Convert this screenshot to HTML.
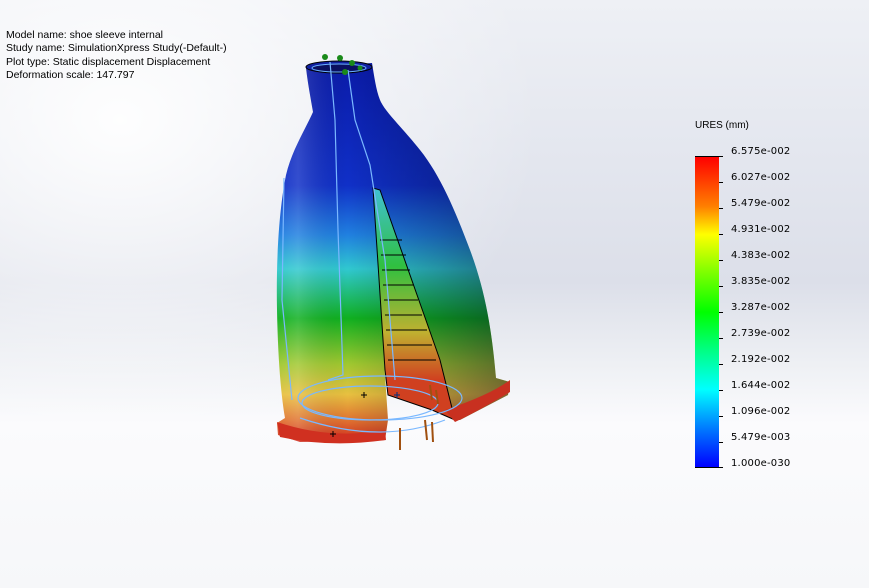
<!DOCTYPE html>
<html><head><meta charset="utf-8"><style>
html,body{margin:0;padding:0}
body{width:869px;height:588px;overflow:hidden;position:relative;font-family:"DejaVu Sans","Liberation Sans",sans-serif;
background:linear-gradient(180deg,#eef0f5 0%,#e4e7ef 25%,#dcdfe9 48%,#eef0f4 62%,#fbfbfd 72%,#f6f7f9 100%);}
.fade{position:absolute;left:0;top:0;width:869px;height:588px;background:radial-gradient(ellipse 420px 330px at 120px 120px,rgba(255,255,255,0.95),rgba(255,255,255,0) 100%);}
.info{position:absolute;left:6px;top:29px;font-size:10.5px;line-height:13.3px;color:#000;font-family:"Liberation Sans",sans-serif;}
.lbl{position:absolute;left:731px;font-size:10px;color:#000;letter-spacing:0.2px}
.tick{position:absolute;left:719px;width:4px;height:1px;background:#000}
</style></head><body>
<div class="fade"></div>
<div class="info">Model name: shoe sleeve internal<br>Study name: SimulationXpress Study(-Default-)<br>Plot type: Static displacement Displacement<br>Deformation scale: 147.797</div>
<div style="position:absolute;left:695px;top:120px;font-size:10px;font-family:'Liberation Sans',sans-serif">URES (mm)</div>
<div style="position:absolute;left:695px;top:156px;width:24px;height:312px;border-top:1px solid #000;border-bottom:1px solid #000;box-sizing:border-box;background:linear-gradient(180deg,#ff0000 0%,#ff8000 16%,#ffff00 25%,#80ff00 37%,#00ff00 50%,#00ff80 62%,#00ffff 75%,#0080ff 87%,#0000ff 100%)"></div>
<div class="tick" style="top:156px"></div><div class="tick" style="top:182px"></div><div class="tick" style="top:208px"></div><div class="tick" style="top:234px"></div><div class="tick" style="top:260px"></div><div class="tick" style="top:286px"></div><div class="tick" style="top:312px"></div><div class="tick" style="top:338px"></div><div class="tick" style="top:364px"></div><div class="tick" style="top:390px"></div><div class="tick" style="top:416px"></div><div class="tick" style="top:442px"></div><div class="tick" style="top:467px"></div>
<div class="lbl" style="top:146px">6.575e-002</div>
<div class="lbl" style="top:172px">6.027e-002</div>
<div class="lbl" style="top:198px">5.479e-002</div>
<div class="lbl" style="top:224px">4.931e-002</div>
<div class="lbl" style="top:250px">4.383e-002</div>
<div class="lbl" style="top:276px">3.835e-002</div>
<div class="lbl" style="top:302px">3.287e-002</div>
<div class="lbl" style="top:328px">2.739e-002</div>
<div class="lbl" style="top:354px">2.192e-002</div>
<div class="lbl" style="top:380px">1.644e-002</div>
<div class="lbl" style="top:406px">1.096e-002</div>
<div class="lbl" style="top:432px">5.479e-003</div>
<div class="lbl" style="top:458px">1.000e-030</div>
<svg width="869" height="588" style="position:absolute;left:0;top:0">
<defs>
<linearGradient id="g" x1="0" y1="60" x2="0" y2="440" gradientUnits="userSpaceOnUse">
<stop offset="0" stop-color="#0a1aa8"/><stop offset="0.33" stop-color="#1030c8"/><stop offset="0.46" stop-color="#2080e0"/><stop offset="0.55" stop-color="#30c8d0"/><stop offset="0.68" stop-color="#10b020"/><stop offset="0.8" stop-color="#a0c830"/><stop offset="0.88" stop-color="#e8c040"/><stop offset="0.95" stop-color="#e07030"/><stop offset="1" stop-color="#d03020"/></linearGradient>
<linearGradient id="sh" x1="280" y1="0" x2="505" y2="0" gradientUnits="userSpaceOnUse">
<stop offset="0" stop-color="#fff" stop-opacity="0.05"/><stop offset="0.08" stop-color="#fff" stop-opacity="0.15"/><stop offset="0.3" stop-color="#000" stop-opacity="0"/><stop offset="0.7" stop-color="#000020" stop-opacity="0.25"/><stop offset="1" stop-color="#000020" stop-opacity="0.45"/></linearGradient>
<linearGradient id="sl" x1="0" y1="190" x2="0" y2="380" gradientUnits="userSpaceOnUse">
<stop offset="0" stop-color="#40c0d0"/><stop offset="0.4" stop-color="#30c040"/><stop offset="0.75" stop-color="#c0b030"/><stop offset="1" stop-color="#d04020"/></linearGradient>
</defs>
<path id="body" d="M306,68 C308,85 311,100 313,112 C305,130 292,150 286,175 C279,210 276,260 277,310 C278,360 281,395 285,418 L277,423 L278,435 L300,442 L385,440 L388,420 L384,360 L378,240 L373,190 L380,190 L440,360 L455,420 L460,420 L508,395 L510,382 L496,378 C492,330 485,290 470,250 C455,210 440,175 420,150 C400,125 385,112 380,100 C376,90 374,75 372,63 Z" fill="url(#g)"/>
<path d="M306,68 C308,85 311,100 313,112 C305,130 292,150 286,175 C279,210 276,260 277,310 C278,360 281,395 285,418 L277,423 L278,435 L300,442 L385,440 L388,420 L384,360 L378,240 L373,190 L380,190 L440,360 L455,420 L460,420 L508,395 L510,382 L496,378 C492,330 485,290 470,250 C455,210 440,175 420,150 C400,125 385,112 380,100 C376,90 374,75 372,63 Z" fill="url(#sh)"/>
<!-- slit inner -->
<path d="M373,188 L380,190 L440,360 L455,420 L432,410 L388,395 L385,370 Z" fill="url(#sl)" stroke="#000" stroke-width="1"/>
<g stroke="#000" stroke-width="1">
<line x1="380" y1="240" x2="402" y2="240"/><line x1="381" y1="255" x2="406" y2="255"/><line x1="382" y1="270" x2="410" y2="270"/><line x1="383" y1="285" x2="414" y2="285"/><line x1="384" y1="300" x2="418" y2="300"/><line x1="385" y1="315" x2="422" y2="315"/><line x1="386" y1="330" x2="427" y2="330"/><line x1="387" y1="345" x2="432" y2="345"/><line x1="388" y1="360" x2="436" y2="360"/></g>
<!-- flanges -->
<path d="M277,422 Q330,440 385,430 L386,440 Q330,448 280,437 Z" fill="#d03020"/>
<path d="M445,410 Q490,395 510,380 L510,392 Q480,410 455,422 Z" fill="#c83020"/>
<!-- neck top -->
<ellipse cx="339" cy="67" rx="33" ry="6" fill="#1020a0" stroke="#000" stroke-width="1"/>
<ellipse cx="339" cy="68" rx="27" ry="4" fill="#0a1060" stroke="#6ab0ff" stroke-width="1"/>
<!-- wire lines -->
<g fill="none" stroke="#7ab8ff" stroke-width="1.2">
<path d="M330,62 L335,120 L338,230 L343,375 L328,380"/>
<path d="M348,70 L355,120 L370,165 L385,260 L395,380"/>
<path d="M284,178 L282,300 L292,400"/>
<ellipse cx="370" cy="403" rx="68" ry="17"/>
<ellipse cx="380" cy="398" rx="82" ry="22"/>
<path d="M300,418 Q380,445 445,420"/>
</g>
<g fill="#1a8a1a"><circle cx="325" cy="57" r="3"/><circle cx="340" cy="58" r="3"/><circle cx="352" cy="63" r="3"/><circle cx="345" cy="72" r="3"/><circle cx="360" cy="68" r="2.5"/></g>
<g stroke="#a05010" stroke-width="2"><line x1="400" y1="450" x2="400" y2="428"/><line x1="427" y1="440" x2="425" y2="420"/><line x1="433" y1="442" x2="432" y2="422"/><line x1="432" y1="400" x2="430" y2="385"/><line x1="438" y1="404" x2="436" y2="390"/></g>
<g stroke="#000" stroke-width="1"><path d="M361,395h6M364,392v6M330,434h6M333,431v6"/></g>
<path d="M394,395h6M397,392v6" stroke="#003080" stroke-width="1"/>
</svg>
</body></html>
